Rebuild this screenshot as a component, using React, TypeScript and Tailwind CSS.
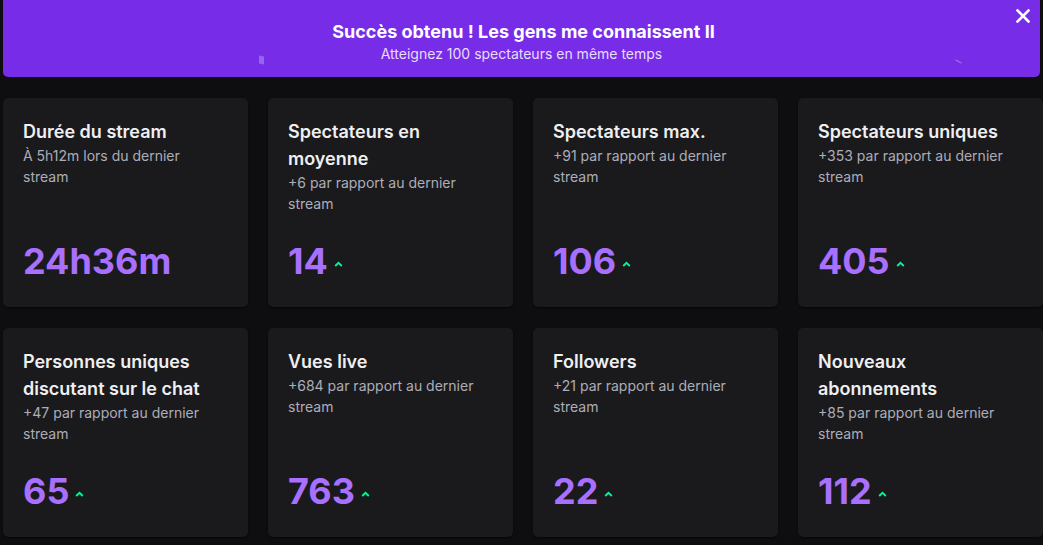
import React from "react";

type Stat = { title: string; sub: string; value: string; up?: boolean };

const stats: Stat[] = [
  { title: "Durée du stream", sub: "À 5h12m lors du dernier stream", value: "24h36m" },
  { title: "Spectateurs en moyenne", sub: "+6 par rapport au dernier stream", value: "14", up: true },
  { title: "Spectateurs max.", sub: "+91 par rapport au dernier stream", value: "106", up: true },
  { title: "Spectateurs uniques", sub: "+353 par rapport au dernier stream", value: "405", up: true },
  { title: "Personnes uniques discutant sur le chat", sub: "+47 par rapport au dernier stream", value: "65", up: true },
  { title: "Vues live", sub: "+684 par rapport au dernier stream", value: "763", up: true },
  { title: "Followers", sub: "+21 par rapport au dernier stream", value: "22", up: true },
  { title: "Nouveaux abonnements", sub: "+85 par rapport au dernier stream", value: "112", up: true },
];

function Chevron() {
  return (
    <svg width="9" height="6" viewBox="0 0 9 6" className="ml-[6px] mt-[6px]">
      <polyline points="1.2,5 4.5,1.8 7.8,5" fill="none" stroke="#00f593" strokeWidth="2" />
    </svg>
  );
}

function Card({ s }: { s: Stat }) {
  return (
    <div className="flex h-[209px] flex-col rounded-[5px] bg-[#1a1a1d] px-5 pt-5 pb-[28px] shadow-[0_1px_2px_rgba(0,0,0,0.6)]">
      <div className="text-[18px] font-semibold leading-[27px] text-[#efeff1]">{s.title}</div>
      <div className="text-[14px] leading-[21px] text-[#adadb8]">{s.sub}</div>
      <div className="mt-auto flex items-center">
        <span className="text-[36px] font-bold leading-none text-[#a970ff]">{s.value}</span>
        {s.up && <Chevron />}
      </div>
    </div>
  );
}

export default function App() {
  return (
    <div
      className="min-h-[545px] w-full bg-[#0e0e10] pb-4"
      style={{ fontFamily: "Inter, 'Noto Sans', sans-serif" }}
    >
      <div className="relative ml-[3px] mr-[3px] flex h-[77px] flex-col items-center rounded-b-[5px] bg-[#772ce8] pt-[20px]">
        <div className="pl-[4px] text-[18px] font-bold leading-[24px] text-white">
          Succès obtenu ! Les gens me connaissent II
        </div>
        <div className="text-[14px] leading-[19px] text-[#e8ddfb]">
          Atteignez 100 spectateurs en même temps
        </div>
        <div className="absolute left-[256px] top-[56px] h-[8px] w-[5px] skew-y-12 bg-[#9466ee]" />
        <div className="absolute left-[952px] top-[61px] h-[1px] w-[7px] rotate-[30deg] bg-[#9a72ee]" />
        <button className="absolute right-[9px] top-[8px] flex h-[16px] w-[16px] items-center justify-center">
          <svg width="14" height="14" viewBox="0 0 14 14">
            <path d="M1.5 1.5 L12.5 12.5 M12.5 1.5 L1.5 12.5" stroke="white" strokeWidth="2.6" strokeLinecap="square" />
          </svg>
        </button>
      </div>
      <div className="mt-[21px] grid grid-cols-4 gap-x-5 gap-y-[21px] pl-[3px]">
        {stats.map((s) => (
          <Card key={s.title} s={s} />
        ))}
      </div>
    </div>
  );
}
